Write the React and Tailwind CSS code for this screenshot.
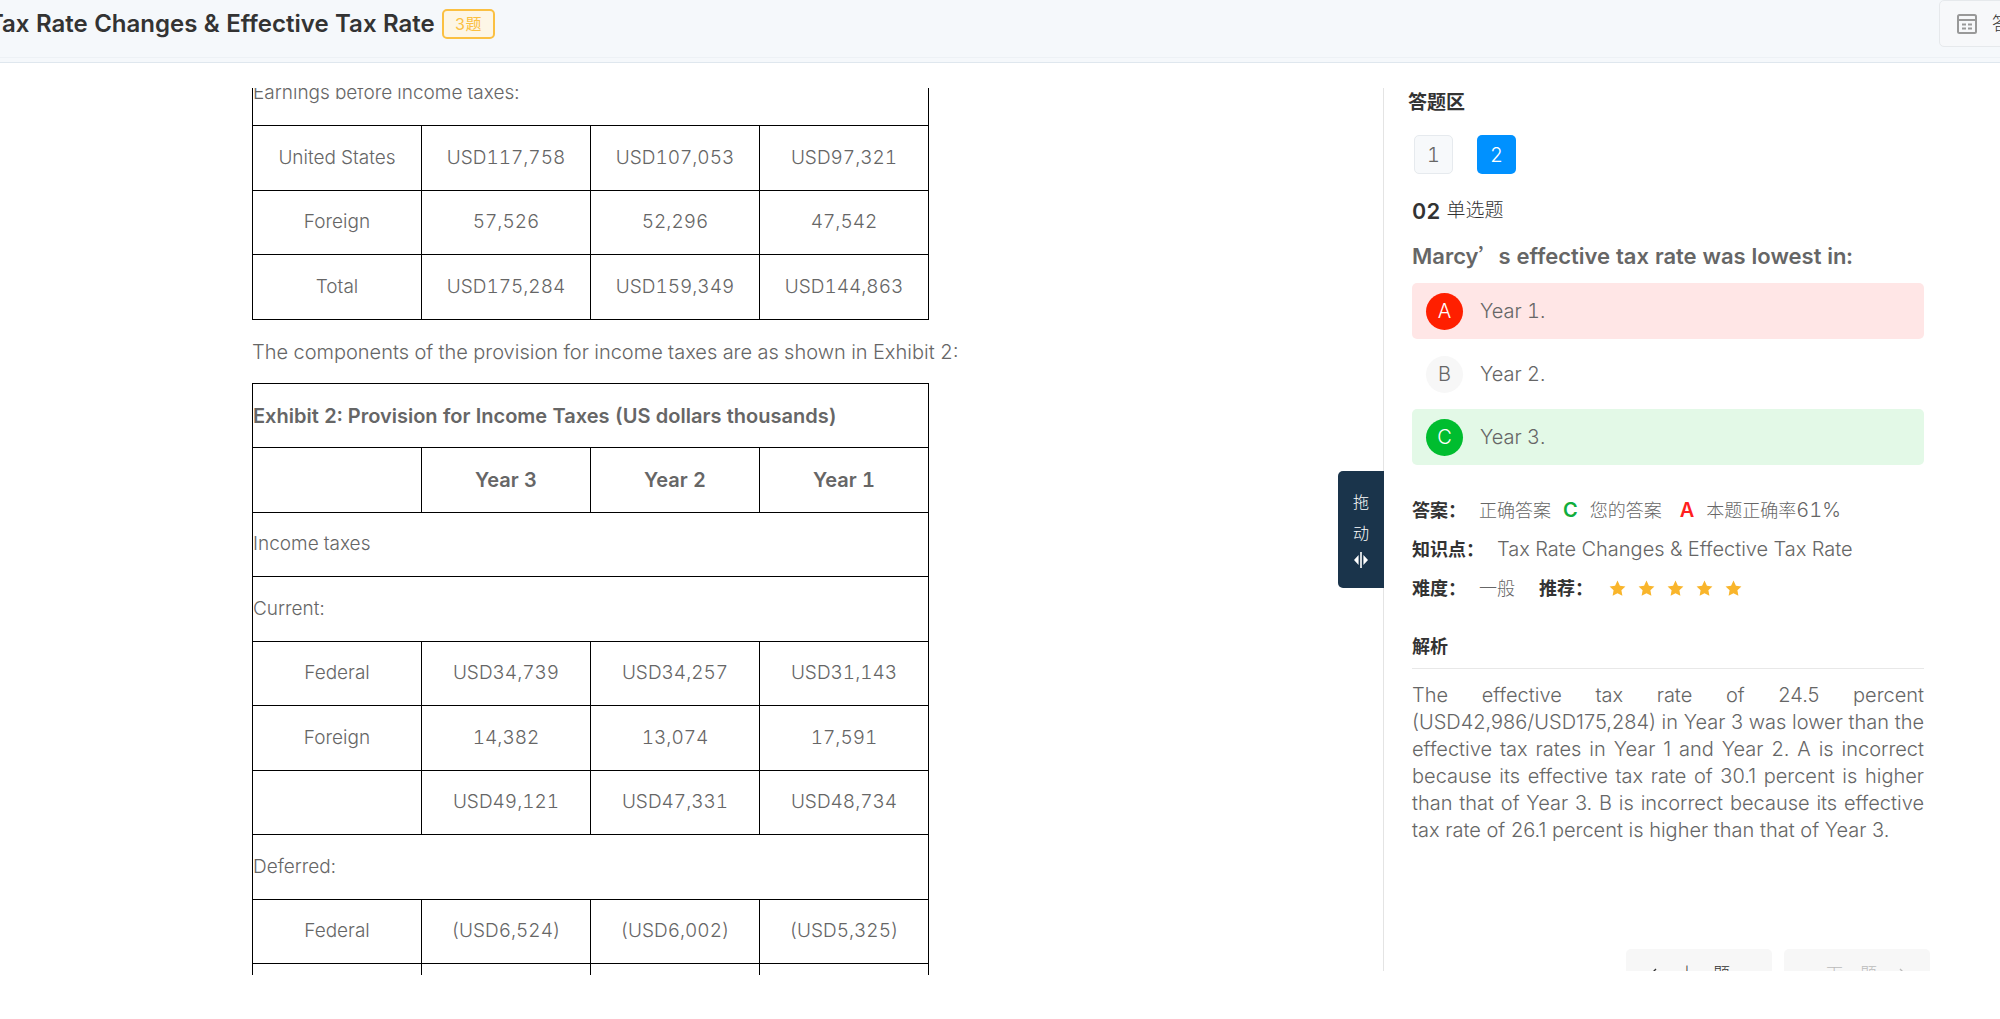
import React from "react";

const FONTS = "font-['Inter','Noto_Sans_CJK_SC',sans-serif]";

const incomeRows = [
  ["United States", "USD117,758", "USD107,053", "USD97,321"],
  ["Foreign", "57,526", "52,296", "47,542"],
  ["Total", "USD175,284", "USD159,349", "USD144,863"],
];

const provisionRows = [
  { cells: ["Exhibit 2: Provision for Income Taxes (US dollars thousands)"], head: true },
  { cells: ["", "Year 3", "Year 2", "Year 1"], head: true },
  { cells: ["Income taxes"] },
  { cells: ["Current:"] },
  { cells: ["Federal", "USD34,739", "USD34,257", "USD31,143"] },
  { cells: ["Foreign", "14,382", "13,074", "17,591"] },
  { cells: ["", "USD49,121", "USD47,331", "USD48,734"] },
  { cells: ["Deferred:"] },
  { cells: ["Federal", "(USD6,524)", "(USD6,002)", "(USD5,325)"] },
  { cells: ["", "", "", ""] },
];

function ExhibitTable({ rows, className = "" }) {
  return (
    <table className={`w-[677px] table-fixed border-collapse text-[19px] ${className}`}>
      <colgroup>
        <col />
        <col />
        <col />
        <col />
      </colgroup>
      <tbody>
        {rows.map((row, r) => (
          <tr key={r} className="h-16 even:h-[65px]">
            {row.cells.map((cell, c) => {
              const Cell = row.head ? "th" : "td";
              const wide = row.cells.length === 1;
              return (
                <Cell
                  key={c}
                  colSpan={wide ? 4 : 1}
                  className={`border border-black p-0 ${wide ? "text-left" : "text-center"} ${
                    row.head ? "text-xl font-semibold" : ""
                  }`}
                >
                  {cell}
                </Cell>
              );
            })}
          </tr>
        ))}
      </tbody>
    </table>
  );
}

function CardIcon() {
  return (
    <svg width="20" height="20" viewBox="0 0 20 20" fill="none" stroke="#999" aria-hidden="true">
      <rect x="1" y="1" width="18" height="18" rx="1.5" strokeWidth="2" />
      <path d="M1 6h18" strokeWidth="2" />
      <path d="M5 10.5h4M11 10.5h4M5 14.5h4M11 14.5h4" strokeWidth="1.8" />
    </svg>
  );
}

function DragIcon() {
  return (
    <svg width="16" height="16" viewBox="0 0 16 16" fill="white" aria-hidden="true">
      <rect x="7.2" y="0" width="1.6" height="16" />
      <path d="M5.6 3v10L1 8zM10.4 3v10L15 8z" />
    </svg>
  );
}

function Star() {
  return (
    <svg width="17" height="17" viewBox="0 0 24 24" fill="#f9b52b" aria-hidden="true">
      <path d="M12 .8l3.4 7.2 7.8 1-5.7 5.5 1.4 7.9L12 18.6l-6.9 3.8 1.4-7.9L.8 9l7.8-1z" />
    </svg>
  );
}

function Chevron({ d }) {
  return (
    <svg width="8" height="14" viewBox="0 0 8 14" fill="none" stroke="currentColor" strokeWidth="1.4" aria-hidden="true">
      <path d={d} />
    </svg>
  );
}

const options = [
  { key: "A", text: "Year 1.", row: "bg-[#ffe6e6]", dot: "bg-[#ff1f00] text-white" },
  { key: "B", text: "Year 2.", row: "", dot: "bg-[#f7f7f7] text-[#666]" },
  { key: "C", text: "Year 3.", row: "bg-[#e3f9e7]", dot: "bg-[#00bd2f] text-white" },
];

export default function App() {
  return (
    <div
      className={`flex h-screen flex-col overflow-hidden bg-white text-xl font-light text-[#666] tabular-nums ${FONTS}`}
    >
      <header className="flex h-[63px] shrink-0 border-b border-[#dfe7ee] bg-[#f5f8fb]">
        <div className="flex h-[58px] grow justify-between border-b border-[#edf1f5]">
          <div className="-ml-3 flex h-12 items-center gap-[7px] whitespace-nowrap">
            <h1 className="text-2xl font-semibold text-[#333]">Tax Rate Changes &amp; Effective Tax Rate</h1>
            <span className="flex h-[30px] w-[53px] items-center justify-center rounded-[5px] border-2 border-[#fbc042] bg-[#fdf6e6] text-base font-normal text-[#fbc042]">
              3题
            </span>
          </div>
          <button
            type="button"
            className="-mr-[70px] flex h-[47px] w-[131px] shrink-0 items-center gap-[15px] whitespace-nowrap rounded-[5px] border border-[#e6e9ec] bg-[#f7f8fa] pl-[17px] text-lg text-[#333]"
          >
            <CardIcon />
            答题卡
          </button>
        </div>
      </header>

      <main className="flex min-h-0 grow pt-[25px] pb-11">
        <section className="relative min-w-0 grow">
          <div className="h-full overflow-hidden pl-[252px]">
            <ExhibitTable
              className="-mt-[27px]"
              rows={[{ cells: ["Earnings before income taxes:"] }, ...incomeRows.map((cells) => ({ cells }))]}
            />
            <p className="flex h-[63px] items-center whitespace-nowrap">
              The components of the provision for income taxes are as shown in Exhibit 2:
            </p>
            <ExhibitTable rows={provisionRows} />
          </div>
          <button
            type="button"
            className="absolute top-[383px] -right-px flex h-[117px] w-[46px] flex-col items-center rounded-l-[5px] bg-[#1a344b] pt-4 text-base leading-[31px] text-white"
          >
            <span>拖</span>
            <span>动</span>
            <span className="mt-[3px]">
              <DragIcon />
            </span>
          </button>
        </section>

        <aside className="mb-1 w-[617px] shrink-0 overflow-hidden border-l border-[#e4e4e4] pr-[76px] pl-6">
          <h2 className="text-[19px] leading-[30px] font-bold text-[#333]">答题区</h2>
          <nav className="mt-[17px] flex gap-6 pl-[6px]">
            <button type="button" className="size-[39px] rounded-[5px] border border-[#e6eaee] bg-[#f7f9fb]">
              1
            </button>
            <button type="button" className="size-[39px] rounded-[5px] bg-[#0091ff] text-white">
              2
            </button>
          </nav>

          <div className="pl-1">
            <p className="mt-[23px] flex items-center gap-[6px] text-[19px] leading-7 text-[#333]">
              <span className="text-[22px] font-semibold">02</span>
              单选题
            </p>
            <h3 className="mt-[17px] text-[22px] leading-7 font-semibold whitespace-nowrap">
              Marcy
              <span className="font-['Noto_Sans_CJK_SC',sans-serif] text-xl leading-none" lang="zh-CN">
                ’
              </span>
              s effective tax rate was lowest in:
            </h3>
            <div className="mt-[13px] flex flex-col gap-[7px]">
              {options.map((o) => (
                <button
                  key={o.key}
                  type="button"
                  className={`flex h-14 items-center gap-[17px] rounded-[5px] pl-[14px] ${o.row}`}
                >
                  <span className={`flex size-[37px] items-center justify-center rounded-full ${o.dot}`}>{o.key}</span>
                  {o.text}
                </button>
              ))}
            </div>

            <div className="mt-[26px] flex flex-col text-lg leading-[39px] whitespace-nowrap">
              <p className="flex">
                <strong className="mr-[13px] font-bold text-[#333]">答案：</strong>
                正确答案
                <strong className="mx-3 text-xl leading-[39px] font-semibold text-[#12ad3c]">C</strong>
                您的答案
                <strong className="mr-3 ml-[18px] text-xl leading-[39px] font-semibold text-[#ff1f1f]">A</strong>
                本题正确率<span className="text-xl leading-[39px]">61%</span>
              </p>
              <p className="flex">
                <strong className="mr-[13px] font-bold text-[#333]">知识点：</strong>
                <span className="text-xl leading-[39px]">Tax Rate Changes &amp; Effective Tax Rate</span>
              </p>
              <p className="flex items-center">
                <strong className="mr-[13px] font-bold text-[#333]">难度：</strong>
                一般
                <strong className="mr-4 ml-6 font-bold text-[#333]">推荐：</strong>
                <span className="flex gap-3">
                  {[1, 2, 3, 4, 5].map((n) => (
                    <Star key={n} />
                  ))}
                </span>
              </p>
            </div>

            <h4 className="mt-[25px] border-b border-[#e8e8e8] pb-[7px] text-lg leading-7 font-bold text-[#333]">解析</h4>
            <p className="mt-[13px] text-justify leading-[27px] proportional-nums">
              The effective tax rate of 24.5 percent (USD42,986/USD175,284) in Year 3 was lower than the effective tax
              rates in Year 1 and Year 2. A is incorrect because its effective tax rate of 30.1 percent is higher than
              that of Year 3. B is incorrect because its effective tax rate of 26.1 percent is higher than that of Year 3.
            </p>
          </div>

          <div className="mt-[105px] -mr-[6px] flex justify-end gap-3 text-[17px]">
            <button
              type="button"
              className="flex h-[52px] w-[146px] items-center justify-end gap-[22px] rounded-[5px] bg-[#f7f7f7] pr-[42px] whitespace-nowrap text-[#333]"
            >
              <Chevron d="M7 1L1 7l6 6" />
              上一题
            </button>
            <button
              type="button"
              disabled
              className="flex h-[52px] w-[146px] items-center gap-[22px] rounded-[5px] bg-[#f7f7f7] pl-[42px] whitespace-nowrap text-[#bbb]"
            >
              下一题
              <Chevron d="M1 1l6 6-6 6" />
            </button>
          </div>
        </aside>
      </main>
    </div>
  );
}
